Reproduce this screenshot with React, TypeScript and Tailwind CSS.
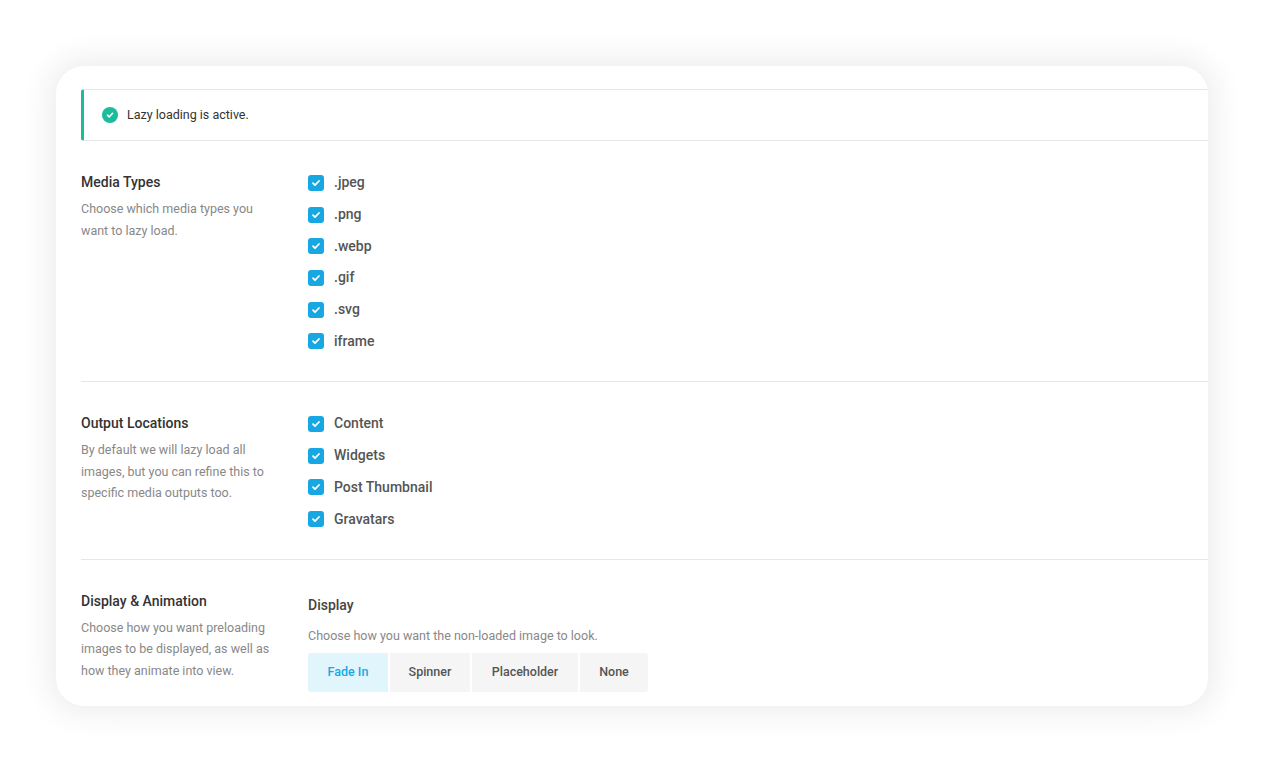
import React from "react";

const Check = ({ label }: { label: string }) => (
  <div className="flex items-center h-[31.7px]">
    <span className="w-4 h-4 rounded-[3px] bg-[#17a8e3] flex items-center justify-center">
      <svg width="10" height="10" viewBox="0 0 10 10"><path d="M2 5.2l2 2 4-4.2" stroke="#fff" strokeWidth="1.8" fill="none" strokeLinecap="round" strokeLinejoin="round" /></svg>
    </span>
    <span className="ml-[10px] text-[14px] text-[#555] font-medium">{label}</span>
  </div>
);

const Left = ({ title, desc }: { title: string; desc: string }) => (
  <div className="w-[227px] shrink-0">
    <div className="text-[14px] font-medium text-[#333] leading-[20px]">{title}</div>
    <div className="mt-[6px] text-[12.5px] text-[#888] leading-[21.5px] w-[190px]">{desc}</div>
  </div>
);

export default function App() {
  return (
    <div className="w-[1264px] h-[772px] bg-white relative" style={{ fontFamily: "Roboto, sans-serif" }}>
      <div className="absolute left-[56px] top-[66px] w-[1152px] h-[640px] rounded-[28px] bg-white overflow-hidden shadow-[0_0_30px_8px_rgba(0,0,0,0.07)]">
        <div className="pl-[25px] pt-[23px] w-[1200px]">
          <div className="h-[52px] border border-[#e6e6e6] border-l-[3px] border-l-[#1abc9c] rounded-[3px] flex items-center pl-[18px]">
            <span className="w-4 h-4 rounded-full bg-[#1abc9c] flex items-center justify-center">
              <svg width="10" height="10" viewBox="0 0 10 10"><path d="M2.5 5.2l1.7 1.7 3.4-3.6" stroke="#fff" strokeWidth="1.6" fill="none" strokeLinecap="round" strokeLinejoin="round" /></svg>
            </span>
            <span className="ml-[9px] text-[12.5px] text-[#333]">Lazy loading is active.</span>
          </div>
          <div className="flex pt-[31px] pb-[24px] border-b border-[#e6e6e6]">
            <Left title="Media Types" desc="Choose which media types you want to lazy load." />
            <div className="-mt-[5px]">
              {[".jpeg", ".png", ".webp", ".gif", ".svg", "iframe"].map(l => <Check key={l} label={l} />)}
            </div>
          </div>
          <div className="flex pt-[31px] pb-[24px] border-b border-[#e6e6e6]">
            <Left title="Output Locations" desc="By default we will lazy load all images, but you can refine this to specific media outputs too." />
            <div className="-mt-[5px]">
              {["Content", "Widgets", "Post Thumbnail", "Gravatars"].map(l => <Check key={l} label={l} />)}
            </div>
          </div>
          <div className="flex pt-[31px]">
            <Left title="Display & Animation" desc="Choose how you want preloading images to be displayed, as well as how they animate into view." />
            <div className="pt-[4px]">
              <div className="text-[14px] font-medium text-[#444]">Display</div>
              <div className="mt-[11px] text-[12.5px] text-[#888]">Choose how you want the non-loaded image to look.</div>
              <div className="mt-[7px] flex gap-[2px] text-[12.5px] font-medium">
                <div className="w-[80px] h-[39px] flex items-center justify-center rounded-l-[3px] bg-[#e1f5fd] text-[#17a8e3]">Fade In</div>
                <div className="w-[80px] h-[39px] flex items-center justify-center bg-[#f5f5f5] text-[#555]">Spinner</div>
                <div className="w-[106px] h-[39px] flex items-center justify-center bg-[#f5f5f5] text-[#555]">Placeholder</div>
                <div className="w-[68px] h-[39px] flex items-center justify-center rounded-r-[3px] bg-[#f5f5f5] text-[#555]">None</div>
              </div>
            </div>
          </div>
        </div>
      </div>
    </div>
  );
}
